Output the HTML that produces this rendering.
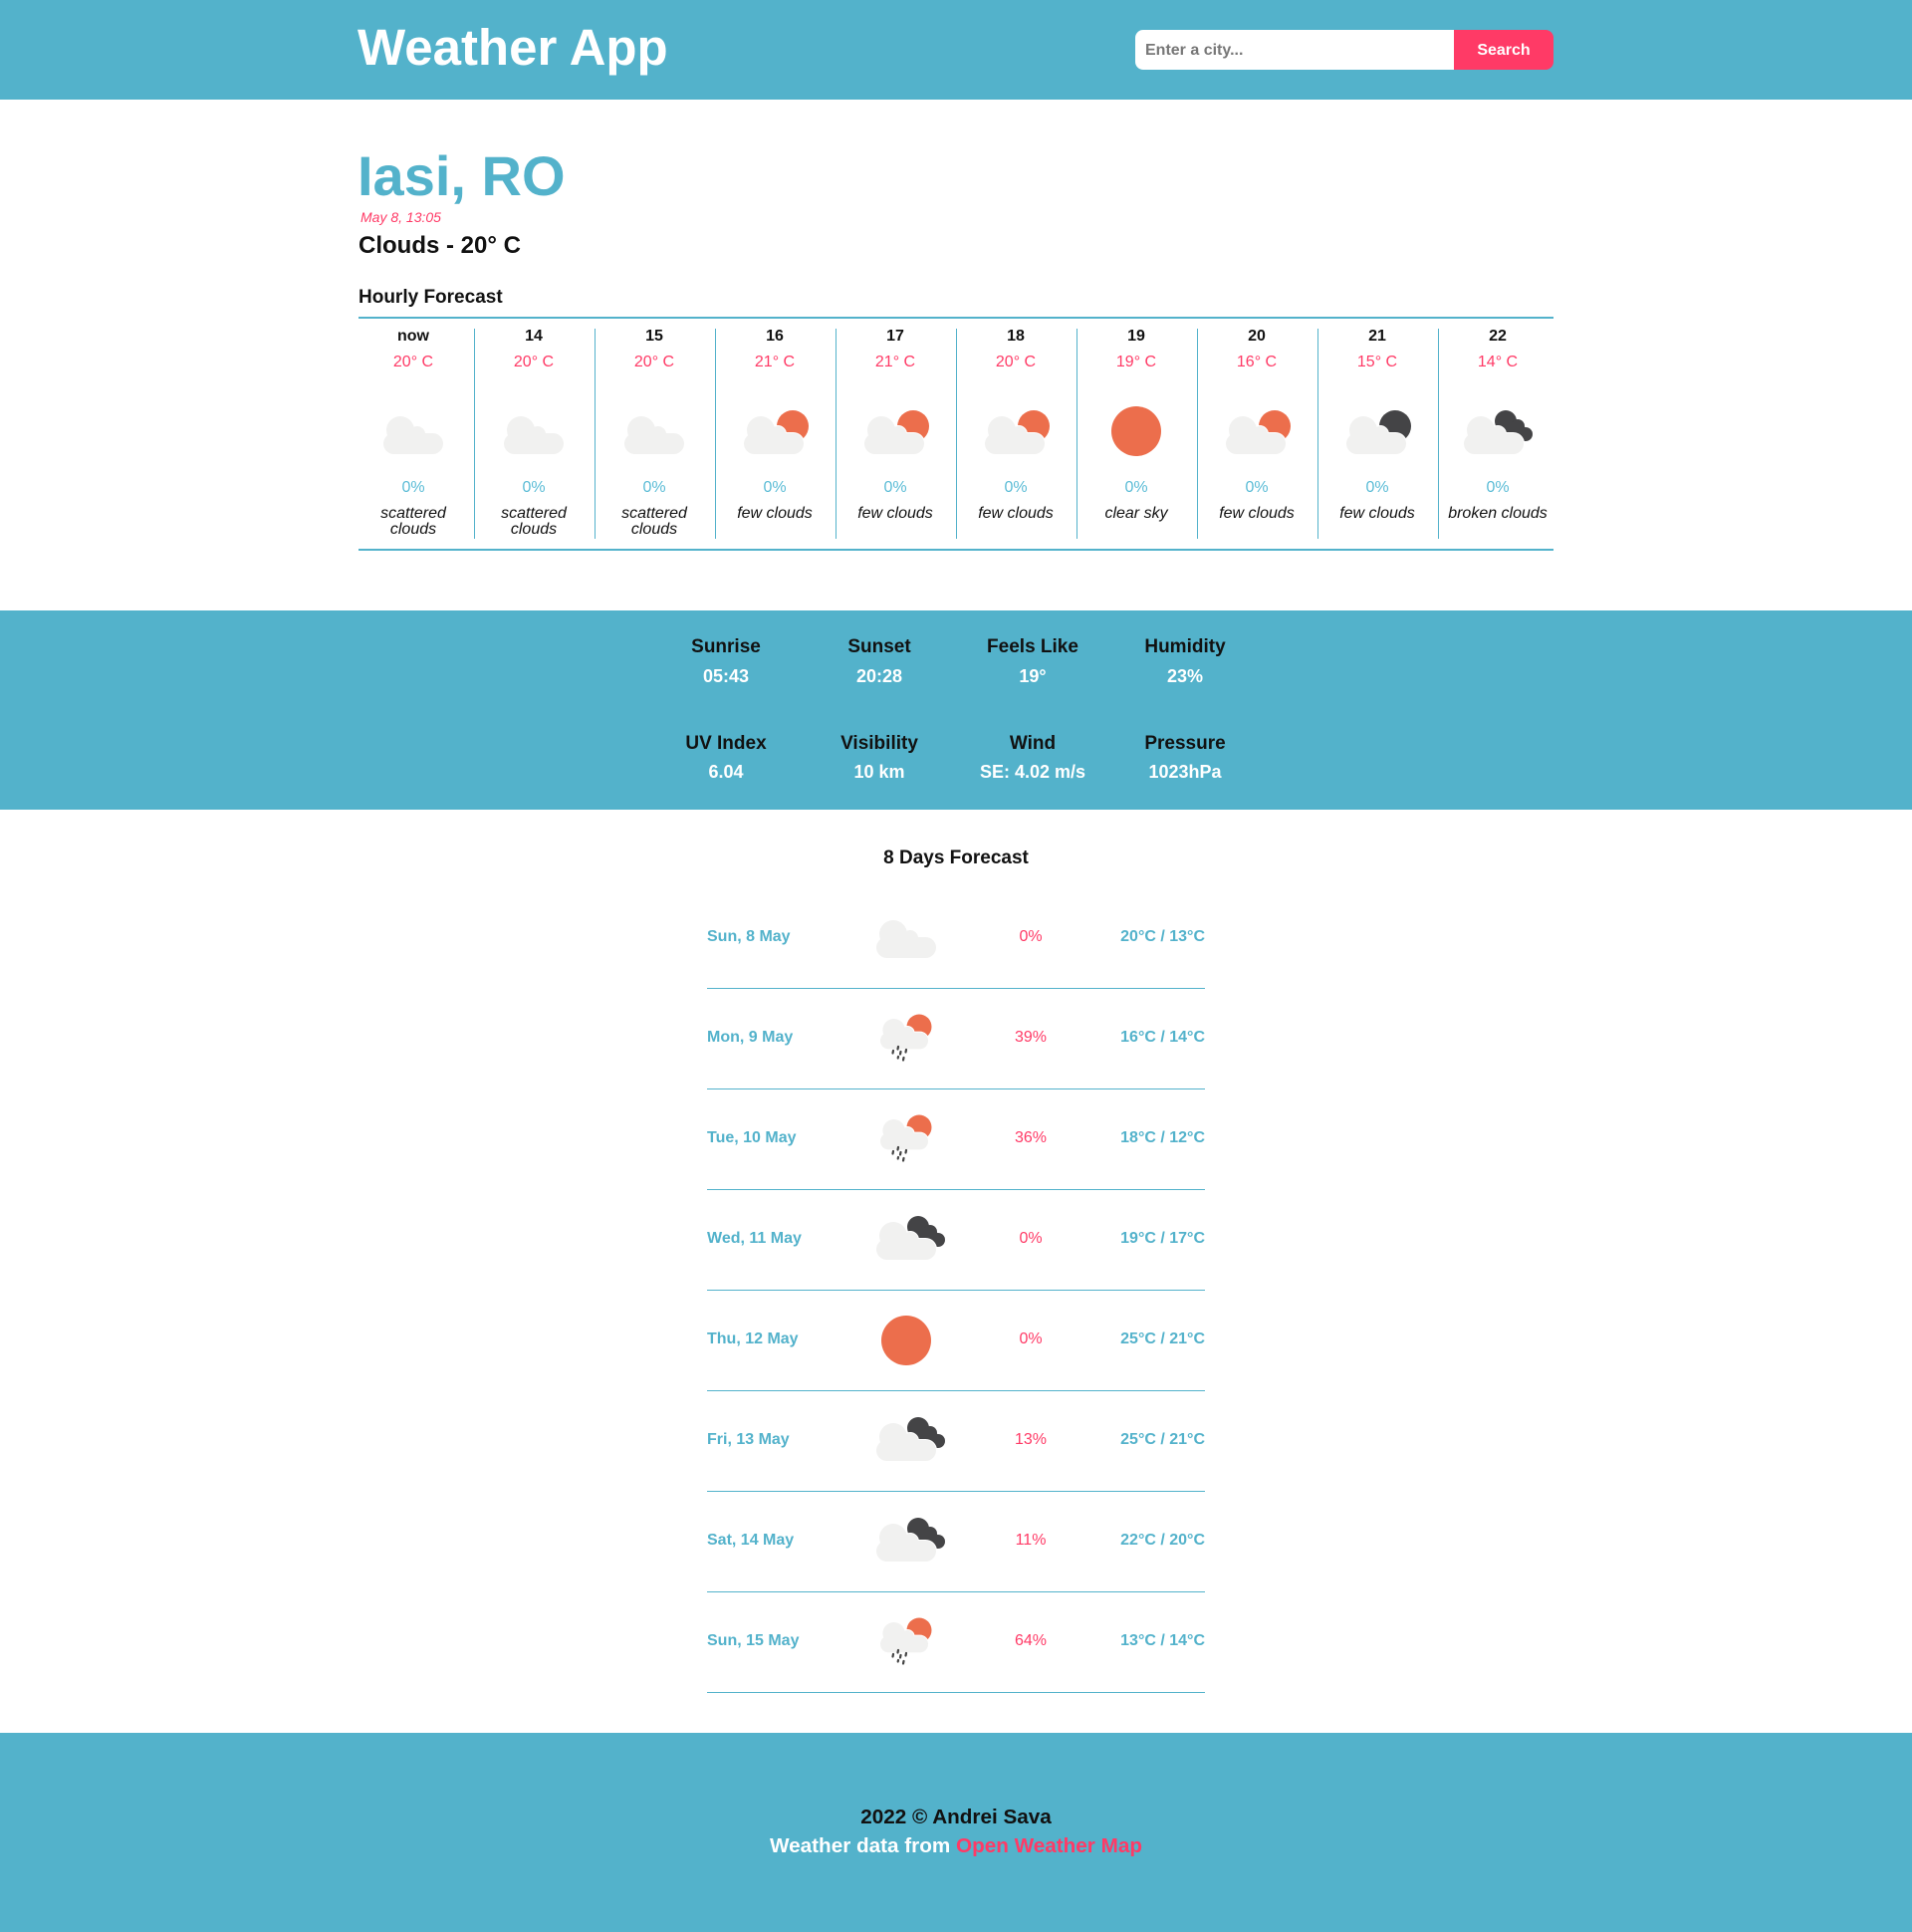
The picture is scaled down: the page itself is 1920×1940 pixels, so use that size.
<!DOCTYPE html>
<html><head><meta charset="utf-8">
<style>
*{margin:0;padding:0;box-sizing:border-box}
body{width:1920px;height:1940px;position:relative;background:#fff;font-family:"Liberation Sans",Arial,sans-serif;overflow:hidden}
.a{position:absolute;white-space:nowrap}
div.a:not([style*="height"]){margin-top:2px}
.c{transform:translateX(-50%);text-align:center}
.teal{color:#53b2cb}
.pink{color:#ff3a66}
</style></head><body>
<svg width="0" height="0" style="position:absolute">
<defs>
<g id="lc"><circle cx="27" cy="29" r="14"/><circle cx="44" cy="33" r="8"/><rect x="10" y="32" width="60" height="21" rx="10.5"/></g>
<symbol id="scat" viewBox="0 0 80 60"><use href="#lc" fill="#f1f1f0"/></symbol>
<symbol id="few" viewBox="0 0 80 60"><circle cx="58" cy="25" r="16" fill="#ec6e4c"/><g transform="translate(-1,0)"><use href="#lc" fill="#f1f1f0" stroke="#fff" stroke-width="2"/><use href="#lc" fill="#f1f1f0"/></g></symbol>
<symbol id="fewn" viewBox="0 0 80 60"><circle cx="58" cy="25" r="16" fill="#444446"/><g transform="translate(-1,0)"><use href="#lc" fill="#f1f1f0" stroke="#fff" stroke-width="2"/><use href="#lc" fill="#f1f1f0"/></g></symbol>
<symbol id="brk" viewBox="0 0 80 60"><g fill="#444446"><circle cx="48" cy="20" r="11"/><circle cx="60" cy="25" r="7"/><circle cx="68" cy="33" r="7"/><polygon points="40,24 60,20 70,28 68,40 50,38"/></g><g transform="translate(-4,0)"><use href="#lc" fill="#f1f1f0" stroke="#fff" stroke-width="2"/><use href="#lc" fill="#f1f1f0"/></g></symbol>
<symbol id="sun" viewBox="0 0 80 60"><circle cx="40" cy="30" r="25" fill="#ec6e4c"/></symbol>
<symbol id="rain" viewBox="0 0 80 60"><circle cx="53" cy="19" r="12.5" fill="#ec6e4c"/><g transform="translate(6,-1) scale(0.8)"><use href="#lc" fill="#f1f1f0" stroke="#fff" stroke-width="2.5"/><use href="#lc" fill="#f1f1f0"/></g><g stroke="#444" stroke-width="2.2" stroke-linecap="round"><line x1="32" y1="39" x2="31.5" y2="41.5"/><line x1="27" y1="43" x2="26.5" y2="45.5"/><line x1="34.5" y1="44" x2="34" y2="46.5"/><line x1="40" y1="42" x2="39.5" y2="44.5"/><line x1="32" y1="49" x2="31.7" y2="50.5"/><line x1="37.5" y1="50" x2="37" y2="52.5"/></g></symbol>
</defs></svg>

<div class="a" style="left:0;top:0;width:1920px;height:100px;background:#53b2cb"></div>
<div class="a" style="left:359px;top:19px;font-size:51px;line-height:58px;font-weight:bold;color:#fff">Weather App</div>
<div class="a" style="left:1140px;top:30px;width:320px;height:40px;background:#fff;border-radius:8px 0 0 8px;font-size:16px;font-weight:bold;color:#777;line-height:42px;padding-left:10px">Enter a city...</div>
<div class="a" style="left:1460px;top:30px;width:100px;height:40px;background:#ff3a66;border-radius:0 8px 8px 0;font-size:16px;font-weight:bold;color:#fff;line-height:42px;text-align:center">Search</div>

<div class="a teal" style="left:359px;top:145px;font-size:56px;line-height:64px;font-weight:bold">Iasi, RO</div>
<div class="a pink" style="left:362px;top:209px;font-size:14px;line-height:18px;font-style:italic">May 8, 13:05</div>
<div class="a" style="left:360px;top:233px;font-size:24px;line-height:28px;font-weight:bold;color:#111">Clouds - 20° C</div>
<div class="a" style="left:360px;top:288px;font-size:19px;line-height:22px;font-weight:bold;color:#111">Hourly Forecast</div>
<div class="a" style="left:360px;top:318px;width:1200px;height:2px;background:#53b2cb"></div>
<div class="a" style="left:360px;top:551px;width:1200px;height:2px;background:#53b2cb"></div>

<div class="a" style="left:0;top:613px;width:1920px;height:200px;background:#53b2cb"></div>

<div class="a c" style="left:960px;top:851px;font-size:19px;line-height:22px;font-weight:bold;color:#111">8 Days Forecast</div>

<div class="a" style="left:0;top:1740px;width:1920px;height:200px;background:#53b2cb"></div>
<div class="a c" style="left:960px;top:1812px;font-size:20.7px;line-height:26px;font-weight:bold;color:#111">2022 © Andrei Sava</div>
<div class="a c" style="left:960px;top:1841px;font-size:20.7px;line-height:26px;font-weight:bold;color:#fff">Weather data from <span style="color:#ff3a66">Open Weather Map</span></div>

<div>
<div class="a" style="left:476px;top:330px;width:1px;height:211px;background:#53b2cb"></div>
<div class="a" style="left:597px;top:330px;width:1px;height:211px;background:#53b2cb"></div>
<div class="a" style="left:718px;top:330px;width:1px;height:211px;background:#53b2cb"></div>
<div class="a" style="left:839px;top:330px;width:1px;height:211px;background:#53b2cb"></div>
<div class="a" style="left:960px;top:330px;width:1px;height:211px;background:#53b2cb"></div>
<div class="a" style="left:1081px;top:330px;width:1px;height:211px;background:#53b2cb"></div>
<div class="a" style="left:1202px;top:330px;width:1px;height:211px;background:#53b2cb"></div>
<div class="a" style="left:1323px;top:330px;width:1px;height:211px;background:#53b2cb"></div>
<div class="a" style="left:1444px;top:330px;width:1px;height:211px;background:#53b2cb"></div>

<div class="a c" style="left:415px;top:328px;font-size:16px;line-height:20px;font-weight:bold;color:#111">now</div>
<div class="a c pink" style="left:415px;top:354px;font-size:16px;line-height:20px">20° C</div>
<svg class="a" style="left:375px;top:403px" width="80" height="60"><use href="#scat"/></svg>
<div class="a c" style="left:415px;top:480px;font-size:16px;line-height:20px;color:#5bbcd6">0%</div>
<div class="a c" style="left:415px;top:508px;font-size:16px;line-height:16px;font-style:italic;color:#111">scattered<br>clouds</div>

<div class="a c" style="left:536px;top:328px;font-size:16px;line-height:20px;font-weight:bold;color:#111">14</div>
<div class="a c pink" style="left:536px;top:354px;font-size:16px;line-height:20px">20° C</div>
<svg class="a" style="left:496px;top:403px" width="80" height="60"><use href="#scat"/></svg>
<div class="a c" style="left:536px;top:480px;font-size:16px;line-height:20px;color:#5bbcd6">0%</div>
<div class="a c" style="left:536px;top:508px;font-size:16px;line-height:16px;font-style:italic;color:#111">scattered<br>clouds</div>

<div class="a c" style="left:657px;top:328px;font-size:16px;line-height:20px;font-weight:bold;color:#111">15</div>
<div class="a c pink" style="left:657px;top:354px;font-size:16px;line-height:20px">20° C</div>
<svg class="a" style="left:617px;top:403px" width="80" height="60"><use href="#scat"/></svg>
<div class="a c" style="left:657px;top:480px;font-size:16px;line-height:20px;color:#5bbcd6">0%</div>
<div class="a c" style="left:657px;top:508px;font-size:16px;line-height:16px;font-style:italic;color:#111">scattered<br>clouds</div>

<div class="a c" style="left:778px;top:328px;font-size:16px;line-height:20px;font-weight:bold;color:#111">16</div>
<div class="a c pink" style="left:778px;top:354px;font-size:16px;line-height:20px">21° C</div>
<svg class="a" style="left:738px;top:403px" width="80" height="60"><use href="#few"/></svg>
<div class="a c" style="left:778px;top:480px;font-size:16px;line-height:20px;color:#5bbcd6">0%</div>
<div class="a c" style="left:778px;top:508px;font-size:16px;line-height:16px;font-style:italic;color:#111">few clouds</div>

<div class="a c" style="left:899px;top:328px;font-size:16px;line-height:20px;font-weight:bold;color:#111">17</div>
<div class="a c pink" style="left:899px;top:354px;font-size:16px;line-height:20px">21° C</div>
<svg class="a" style="left:859px;top:403px" width="80" height="60"><use href="#few"/></svg>
<div class="a c" style="left:899px;top:480px;font-size:16px;line-height:20px;color:#5bbcd6">0%</div>
<div class="a c" style="left:899px;top:508px;font-size:16px;line-height:16px;font-style:italic;color:#111">few clouds</div>

<div class="a c" style="left:1020px;top:328px;font-size:16px;line-height:20px;font-weight:bold;color:#111">18</div>
<div class="a c pink" style="left:1020px;top:354px;font-size:16px;line-height:20px">20° C</div>
<svg class="a" style="left:980px;top:403px" width="80" height="60"><use href="#few"/></svg>
<div class="a c" style="left:1020px;top:480px;font-size:16px;line-height:20px;color:#5bbcd6">0%</div>
<div class="a c" style="left:1020px;top:508px;font-size:16px;line-height:16px;font-style:italic;color:#111">few clouds</div>

<div class="a c" style="left:1141px;top:328px;font-size:16px;line-height:20px;font-weight:bold;color:#111">19</div>
<div class="a c pink" style="left:1141px;top:354px;font-size:16px;line-height:20px">19° C</div>
<svg class="a" style="left:1101px;top:403px" width="80" height="60"><use href="#sun"/></svg>
<div class="a c" style="left:1141px;top:480px;font-size:16px;line-height:20px;color:#5bbcd6">0%</div>
<div class="a c" style="left:1141px;top:508px;font-size:16px;line-height:16px;font-style:italic;color:#111">clear sky</div>

<div class="a c" style="left:1262px;top:328px;font-size:16px;line-height:20px;font-weight:bold;color:#111">20</div>
<div class="a c pink" style="left:1262px;top:354px;font-size:16px;line-height:20px">16° C</div>
<svg class="a" style="left:1222px;top:403px" width="80" height="60"><use href="#few"/></svg>
<div class="a c" style="left:1262px;top:480px;font-size:16px;line-height:20px;color:#5bbcd6">0%</div>
<div class="a c" style="left:1262px;top:508px;font-size:16px;line-height:16px;font-style:italic;color:#111">few clouds</div>

<div class="a c" style="left:1383px;top:328px;font-size:16px;line-height:20px;font-weight:bold;color:#111">21</div>
<div class="a c pink" style="left:1383px;top:354px;font-size:16px;line-height:20px">15° C</div>
<svg class="a" style="left:1343px;top:403px" width="80" height="60"><use href="#fewn"/></svg>
<div class="a c" style="left:1383px;top:480px;font-size:16px;line-height:20px;color:#5bbcd6">0%</div>
<div class="a c" style="left:1383px;top:508px;font-size:16px;line-height:16px;font-style:italic;color:#111">few clouds</div>

<div class="a c" style="left:1504px;top:328px;font-size:16px;line-height:20px;font-weight:bold;color:#111">22</div>
<div class="a c pink" style="left:1504px;top:354px;font-size:16px;line-height:20px">14° C</div>
<svg class="a" style="left:1464px;top:403px" width="80" height="60"><use href="#brk"/></svg>
<div class="a c" style="left:1504px;top:480px;font-size:16px;line-height:20px;color:#5bbcd6">0%</div>
<div class="a c" style="left:1504px;top:508px;font-size:16px;line-height:16px;font-style:italic;color:#111">broken clouds</div>

<div class="a c" style="left:729px;top:639px;font-size:19px;line-height:22px;font-weight:bold;color:#111">Sunrise</div>
<div class="a c" style="left:729px;top:668px;font-size:18px;line-height:22px;font-weight:bold;color:#fff">05:43</div>
<div class="a c" style="left:883px;top:639px;font-size:19px;line-height:22px;font-weight:bold;color:#111">Sunset</div>
<div class="a c" style="left:883px;top:668px;font-size:18px;line-height:22px;font-weight:bold;color:#fff">20:28</div>
<div class="a c" style="left:1037px;top:639px;font-size:19px;line-height:22px;font-weight:bold;color:#111">Feels Like</div>
<div class="a c" style="left:1037px;top:668px;font-size:18px;line-height:22px;font-weight:bold;color:#fff">19°</div>
<div class="a c" style="left:1190px;top:639px;font-size:19px;line-height:22px;font-weight:bold;color:#111">Humidity</div>
<div class="a c" style="left:1190px;top:668px;font-size:18px;line-height:22px;font-weight:bold;color:#fff">23%</div>

<div class="a c" style="left:729px;top:736px;font-size:19px;line-height:22px;font-weight:bold;color:#111">UV Index</div>
<div class="a c" style="left:729px;top:764px;font-size:18px;line-height:22px;font-weight:bold;color:#fff">6.04</div>
<div class="a c" style="left:883px;top:736px;font-size:19px;line-height:22px;font-weight:bold;color:#111">Visibility</div>
<div class="a c" style="left:883px;top:764px;font-size:18px;line-height:22px;font-weight:bold;color:#fff">10 km</div>
<div class="a c" style="left:1037px;top:736px;font-size:19px;line-height:22px;font-weight:bold;color:#111">Wind</div>
<div class="a c" style="left:1037px;top:764px;font-size:18px;line-height:22px;font-weight:bold;color:#fff">SE: 4.02 m/s</div>
<div class="a c" style="left:1190px;top:736px;font-size:19px;line-height:22px;font-weight:bold;color:#111">Pressure</div>
<div class="a c" style="left:1190px;top:764px;font-size:18px;line-height:22px;font-weight:bold;color:#fff">1023hPa</div>

<div class="a teal" style="left:710px;top:931px;font-size:16px;line-height:20px;font-weight:bold">Sun, 8 May</div>
<svg class="a" style="left:870px;top:909px" width="80" height="60"><use href="#scat"/></svg>
<div class="a c pink" style="left:1035px;top:931px;font-size:16px;line-height:20px">0%</div>
<div class="a teal" style="right:710px;top:931px;font-size:16px;line-height:20px;font-weight:bold">20°C / 13°C</div>
<div class="a" style="left:710px;top:992px;width:500px;height:1px;background:#53b2cb"></div>

<div class="a teal" style="left:710px;top:1032px;font-size:16px;line-height:20px;font-weight:bold">Mon, 9 May</div>
<svg class="a" style="left:870px;top:1012px" width="80" height="60"><use href="#rain"/></svg>
<div class="a c pink" style="left:1035px;top:1032px;font-size:16px;line-height:20px">39%</div>
<div class="a teal" style="right:710px;top:1032px;font-size:16px;line-height:20px;font-weight:bold">16°C / 14°C</div>
<div class="a" style="left:710px;top:1093px;width:500px;height:1px;background:#53b2cb"></div>

<div class="a teal" style="left:710px;top:1133px;font-size:16px;line-height:20px;font-weight:bold">Tue, 10 May</div>
<svg class="a" style="left:870px;top:1113px" width="80" height="60"><use href="#rain"/></svg>
<div class="a c pink" style="left:1035px;top:1133px;font-size:16px;line-height:20px">36%</div>
<div class="a teal" style="right:710px;top:1133px;font-size:16px;line-height:20px;font-weight:bold">18°C / 12°C</div>
<div class="a" style="left:710px;top:1194px;width:500px;height:1px;background:#53b2cb"></div>

<div class="a teal" style="left:710px;top:1234px;font-size:16px;line-height:20px;font-weight:bold">Wed, 11 May</div>
<svg class="a" style="left:874px;top:1212px" width="80" height="60"><use href="#brk"/></svg>
<div class="a c pink" style="left:1035px;top:1234px;font-size:16px;line-height:20px">0%</div>
<div class="a teal" style="right:710px;top:1234px;font-size:16px;line-height:20px;font-weight:bold">19°C / 17°C</div>
<div class="a" style="left:710px;top:1295px;width:500px;height:1px;background:#53b2cb"></div>

<div class="a teal" style="left:710px;top:1335px;font-size:16px;line-height:20px;font-weight:bold">Thu, 12 May</div>
<svg class="a" style="left:870px;top:1316px" width="80" height="60"><use href="#sun"/></svg>
<div class="a c pink" style="left:1035px;top:1335px;font-size:16px;line-height:20px">0%</div>
<div class="a teal" style="right:710px;top:1335px;font-size:16px;line-height:20px;font-weight:bold">25°C / 21°C</div>
<div class="a" style="left:710px;top:1396px;width:500px;height:1px;background:#53b2cb"></div>

<div class="a teal" style="left:710px;top:1436px;font-size:16px;line-height:20px;font-weight:bold">Fri, 13 May</div>
<svg class="a" style="left:874px;top:1414px" width="80" height="60"><use href="#brk"/></svg>
<div class="a c pink" style="left:1035px;top:1436px;font-size:16px;line-height:20px">13%</div>
<div class="a teal" style="right:710px;top:1436px;font-size:16px;line-height:20px;font-weight:bold">25°C / 21°C</div>
<div class="a" style="left:710px;top:1497px;width:500px;height:1px;background:#53b2cb"></div>

<div class="a teal" style="left:710px;top:1537px;font-size:16px;line-height:20px;font-weight:bold">Sat, 14 May</div>
<svg class="a" style="left:874px;top:1515px" width="80" height="60"><use href="#brk"/></svg>
<div class="a c pink" style="left:1035px;top:1537px;font-size:16px;line-height:20px">11%</div>
<div class="a teal" style="right:710px;top:1537px;font-size:16px;line-height:20px;font-weight:bold">22°C / 20°C</div>
<div class="a" style="left:710px;top:1598px;width:500px;height:1px;background:#53b2cb"></div>

<div class="a teal" style="left:710px;top:1638px;font-size:16px;line-height:20px;font-weight:bold">Sun, 15 May</div>
<svg class="a" style="left:870px;top:1618px" width="80" height="60"><use href="#rain"/></svg>
<div class="a c pink" style="left:1035px;top:1638px;font-size:16px;line-height:20px">64%</div>
<div class="a teal" style="right:710px;top:1638px;font-size:16px;line-height:20px;font-weight:bold">13°C / 14°C</div>
<div class="a" style="left:710px;top:1699px;width:500px;height:1px;background:#53b2cb"></div>
</div>
</body></html>
